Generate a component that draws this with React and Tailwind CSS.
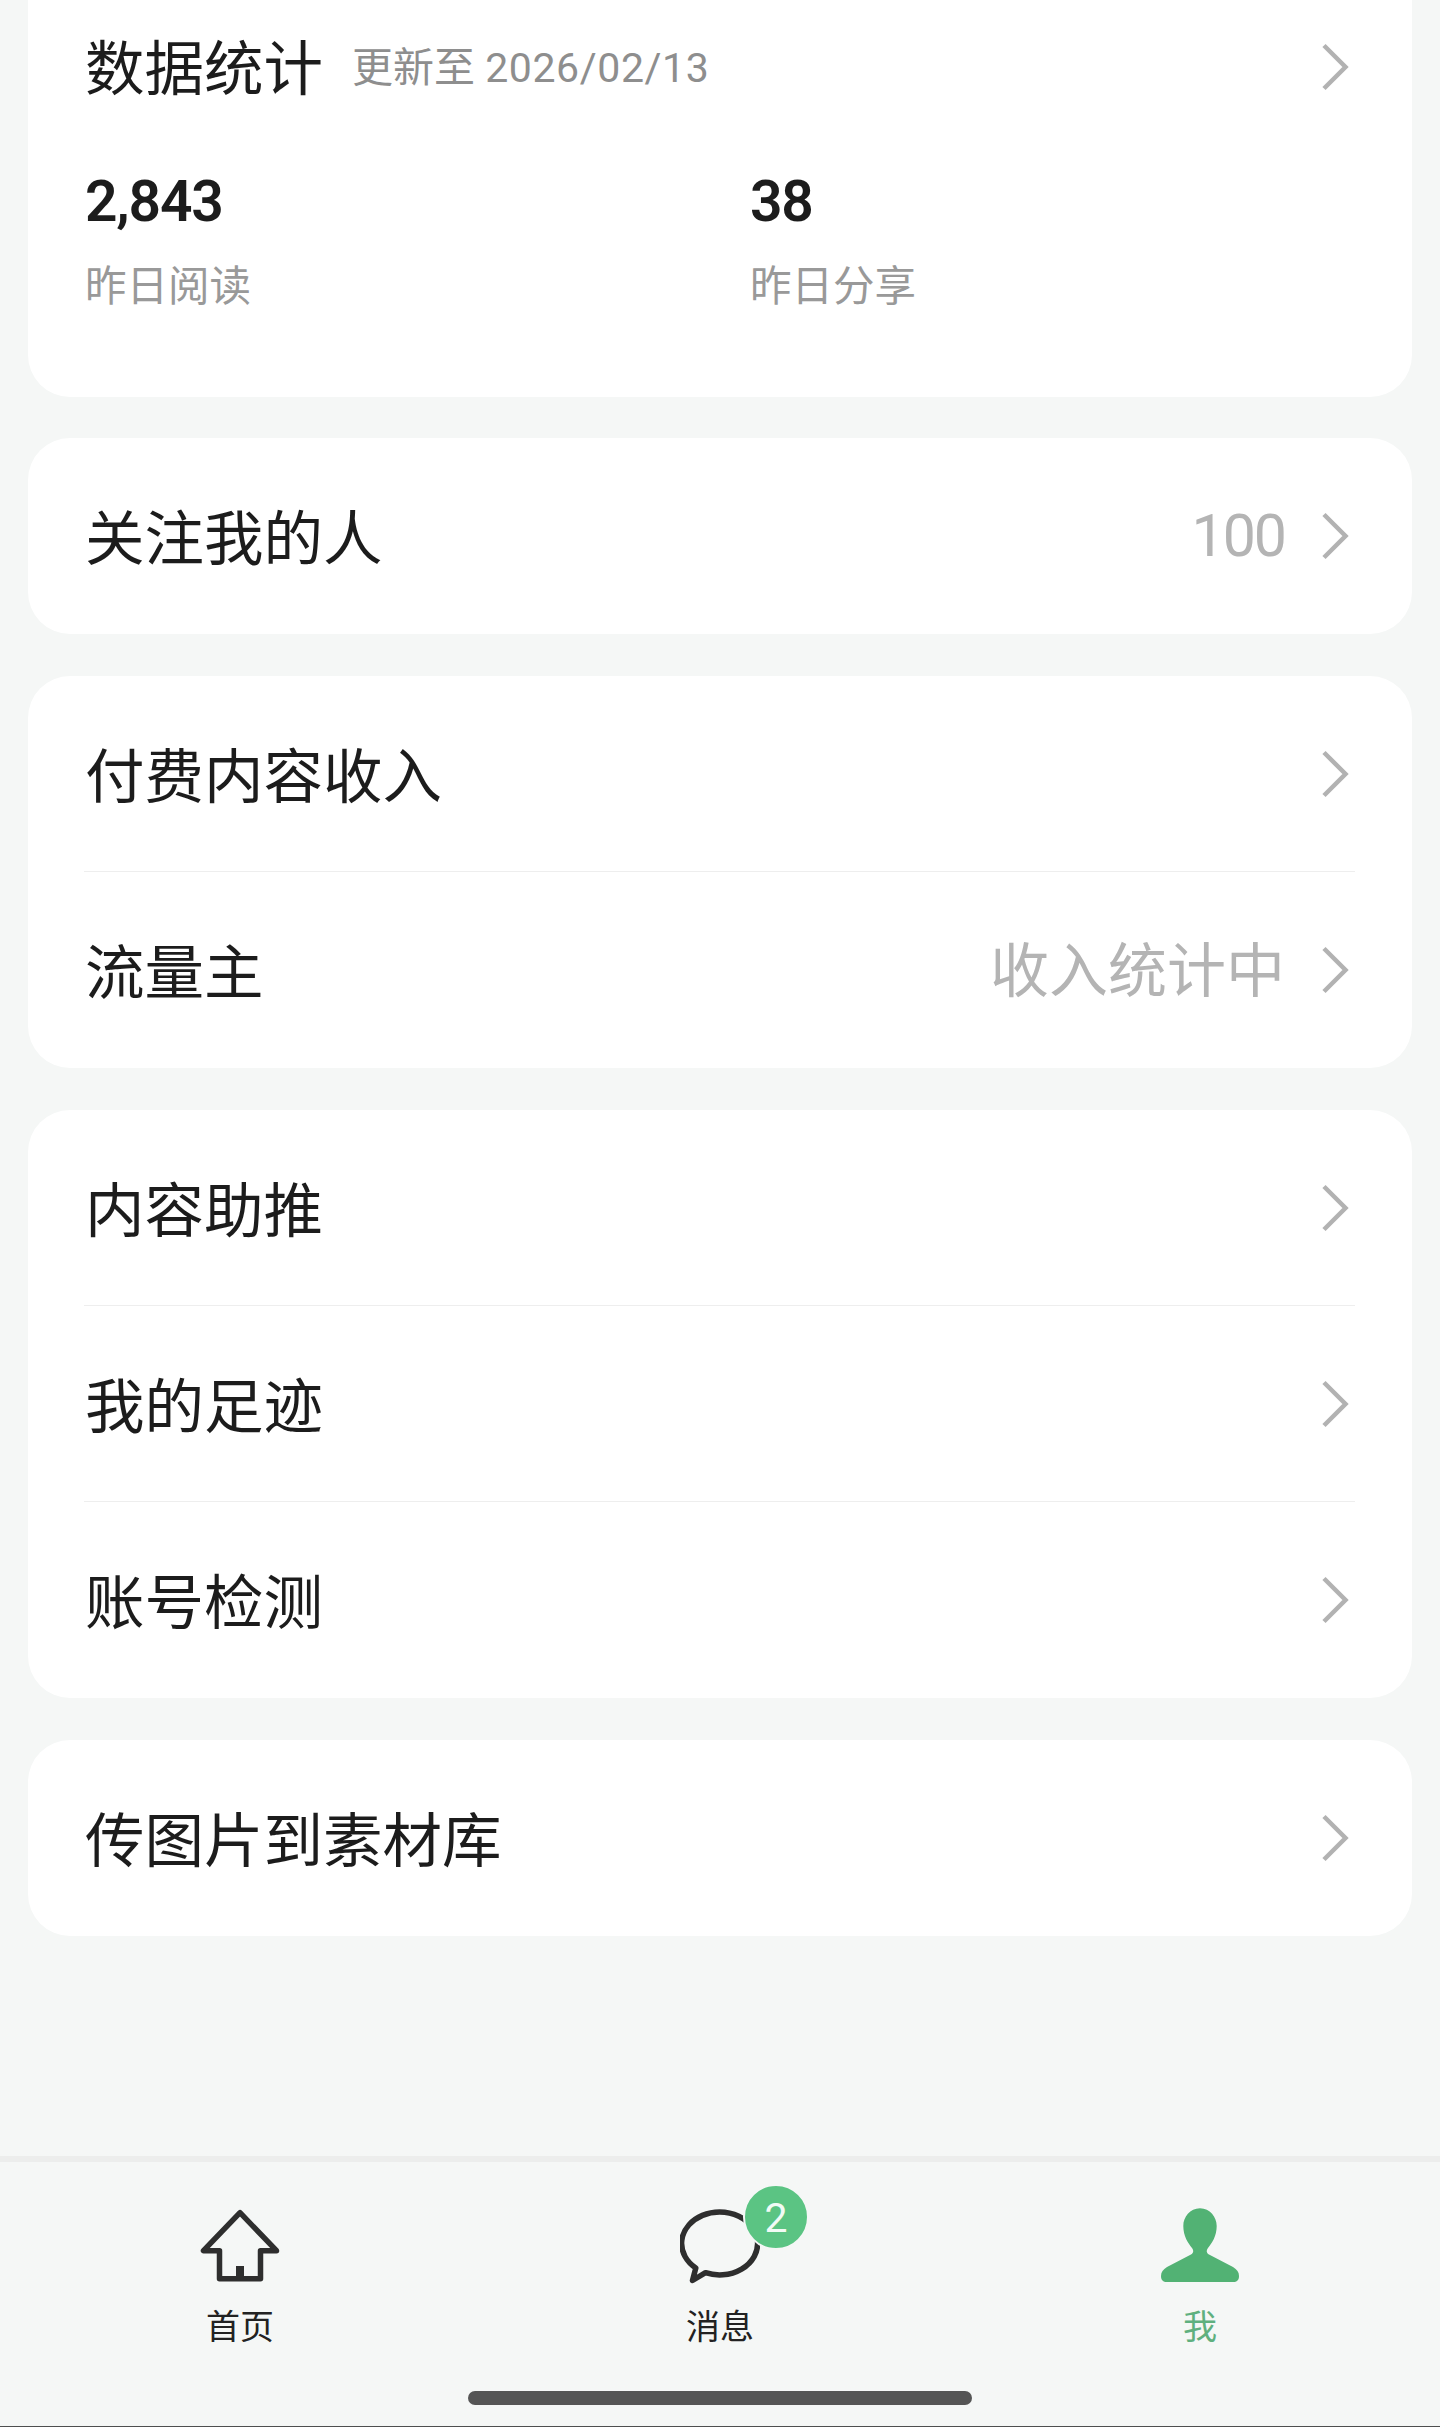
import React from 'react';

function Chevron() {
    return (
        <svg viewBox="0 0 28 52" className="w-[28px] h-[52px] shrink-0 text-[#b2b2b2]" fill="none" stroke="currentColor" strokeWidth="4.5">
            <path d="M3 4.5 L24.5 26 L3 47.5" />
        </svg>
    );
}

function Row({ label, value, numeric, divider }) {
    return (
        <div className="relative h-[196px] flex items-center pl-[57px] pr-[63px]">
            <span className="mt-[8px] text-[59.5px] leading-[80px] text-[#1c1c1c]">{label}</span>
            {value && (
                <span className={`ml-auto mr-[36px] text-[59px] leading-[80px] text-[#b4b4b4] ${numeric ? 'tracking-[-2px]' : 'mt-[4px]'}`}>
                    {value}
                </span>
            )}
            <span className={value ? '' : 'ml-auto'}><Chevron /></span>
            {divider && <div className="absolute left-[56px] right-[57px] bottom-0 h-[1px] bg-[#eeeeee]" />}
        </div>
    );
}

function Card({ rows }) {
    return (
        <div className="bg-white rounded-[42px] mx-[28px]">
            {rows.map((r, i) => (
                <Row key={r.label} label={r.label} value={r.value} numeric={r.numeric} divider={i < rows.length - 1} />
            ))}
        </div>
    );
}

function TabItem({ icon, label, active, children }) {
    return (
        <div className="relative flex flex-col items-center pt-[43px]">
            <div className="relative w-[80px] h-[80px]">
                {icon}
                {children}
            </div>
            <span className={`mt-[22px] text-[34px] leading-[40px] ${active ? 'text-[#5fb07f]' : 'text-[#222222]'}`}>{label}</span>
        </div>
    );
}

export default function App() {
    return (
        <div className="w-[1440px] h-[2427px] bg-[#f5f7f6] flex flex-col font-['Roboto','Noto_Sans_CJK_SC',sans-serif]">
            {/* 数据统计 */}
            <div className="bg-white rounded-b-[42px] mx-[28px] h-[397px] pl-[57px] pr-[63px] pt-[27px]">
                <div className="flex items-center h-[80px]">
                    <span className="mt-[6px] text-[59.5px] leading-[80px] text-[#1c1c1c]">数据统计</span>
                    <span className="ml-[29px] mt-[2px] text-[41px] leading-[60px] text-[#8e8e8e]">
                        更新至 <span className="tracking-[0.6px]">2026/02/13</span>
                    </span>
                    <span className="ml-auto"><Chevron /></span>
                </div>
                <div className="flex mt-[65px]">
                    <div className="w-[665px]">
                        <div className="text-[57px] leading-[60px] font-semibold tracking-[-1.2px] text-[#1c1c1c]">2,843</div>
                        <div className="mt-[30px] text-[41.5px] leading-[50px] text-[#999999]">昨日阅读</div>
                    </div>
                    <div>
                        <div className="text-[57px] leading-[60px] font-semibold tracking-[-1.2px] text-[#1c1c1c]">38</div>
                        <div className="mt-[30px] text-[41.5px] leading-[50px] text-[#999999]">昨日分享</div>
                    </div>
                </div>
            </div>

            <div className="flex flex-col gap-[42px] mt-[41px]">
                <Card rows={[{ label: '关注我的人', value: '100', numeric: true }]} />
                <Card rows={[{ label: '付费内容收入' }, { label: '流量主', value: '收入统计中' }]} />
                <Card rows={[{ label: '内容助推' }, { label: '我的足迹' }, { label: '账号检测' }]} />
                <Card rows={[{ label: '传图片到素材库' }]} />
            </div>

            {/* Tab bar */}
            <div className="relative mt-auto h-[271px] border-t-[6px] border-b-[1px] border-t-[#ecedec] border-b-[#4f4f4f] grid grid-cols-3">
                <TabItem
                    label="首页"
                    icon={
                        <svg viewBox="0 0 80 80" className="w-[80px] h-[80px] text-[#2e2e2e]" fill="none" stroke="currentColor" strokeWidth="5.5" strokeLinejoin="round" strokeLinecap="round">
                            <path d="M40 7.7 L3.5 45.7 H19.5 V73.7 H60.5 V45.7 H76.5 Z" />
                            <rect x="36" y="61" width="8" height="13" fill="currentColor" stroke="none" />
                        </svg>
                    }
                />
                <TabItem
                    label="消息"
                    icon={
                        <svg viewBox="0 0 80 80" className="w-[80px] h-[80px] text-[#2e2e2e]" fill="none" stroke="currentColor" strokeWidth="5.5" strokeLinejoin="round">
                            <path d="M25.5 67.7 A38 31.5 0 1 0 15.8 63 L12.5 75.5 Z" />
                        </svg>
                    }
                >
                    <div className="absolute left-[63px] top-[-21px] w-[66px] h-[66px] rounded-full bg-[#5bc483] border-[2px] border-[#f5f7f6] flex items-center justify-center pt-[4px] text-[41px] text-[#f2fbf5]">2</div>
                </TabItem>
                <TabItem
                    label="我"
                    active
                    icon={
                        <svg viewBox="0 0 80 80" className="w-[80px] h-[80px] text-[#52b274]" fill="currentColor">
                            <path d="M40 3.3 C50 3.3 56.7 12 56.7 21 C56.7 31 52 38 48 43 C46 46 46.5 48 49 49.5 L73 62 C77 64.5 79 67 79 71 C79 75 77 77 73 77 L7 77 C3 77 1 75 1 71 C1 67 3 64.5 7 62 L31 49.5 C33.5 48 34 46 32 43 C28 38 23.3 31 23.3 21 C23.3 12 30 3.3 40 3.3 Z" />
                        </svg>
                    }
                />
                <div className="absolute left-[468px] bottom-[21px] w-[504px] h-[14px] rounded-full bg-[#555555]" />
            </div>
        </div>
    );
}
